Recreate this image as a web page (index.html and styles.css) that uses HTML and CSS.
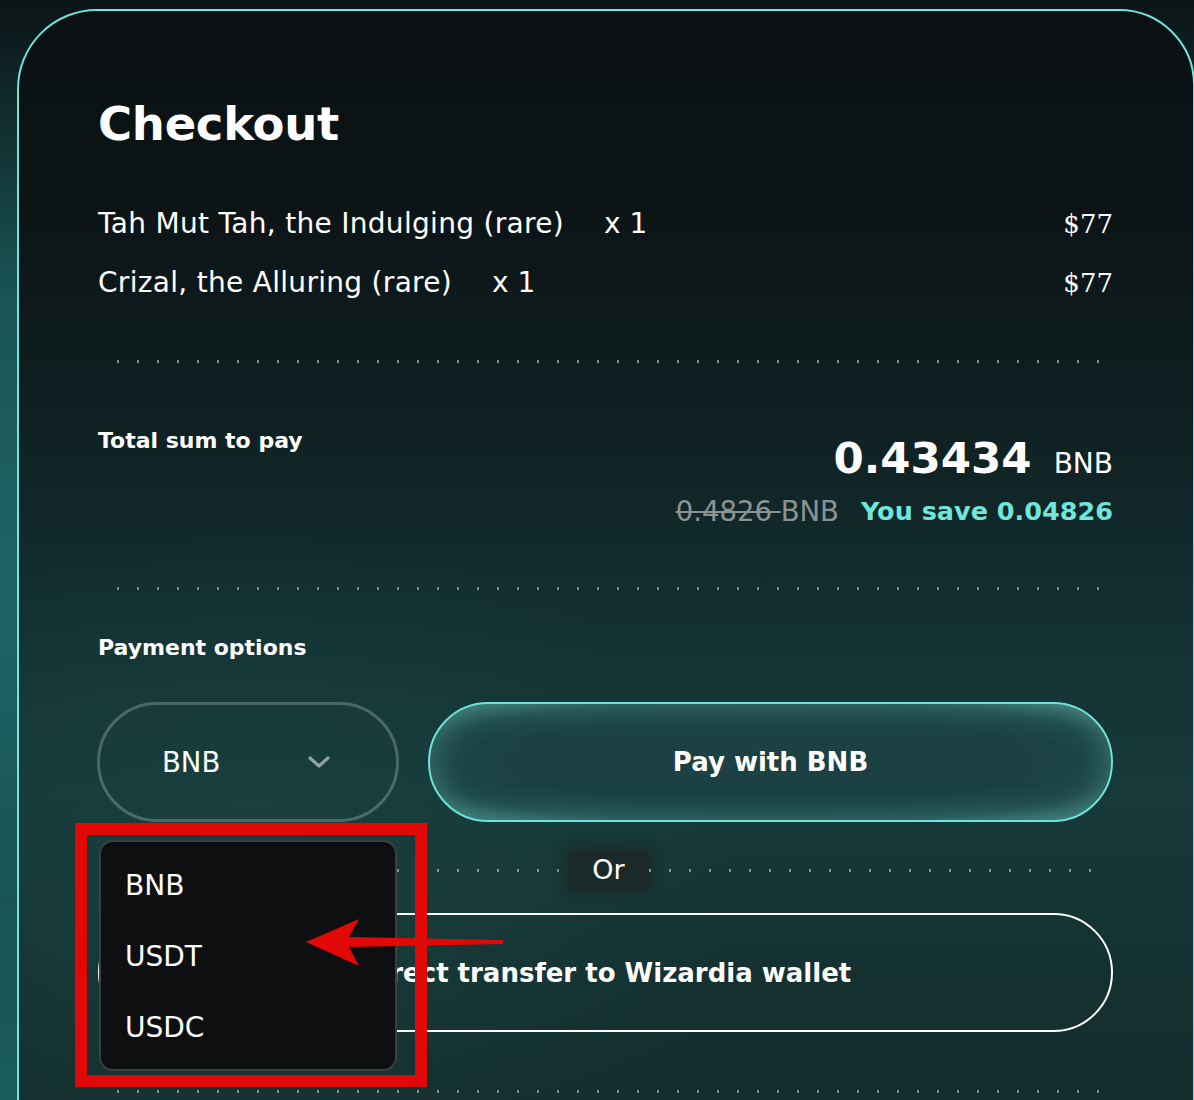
FILE: index.html
```html
<!DOCTYPE html>
<html lang="en">
<head>
    <meta charset="UTF-8">
    <meta name="viewport" content="width=device-width, initial-scale=1.0">
    <title>Checkout</title>
    <link rel="stylesheet" href="styles.css">
</head>
<body>
    <div class="card">
        <h1>Checkout</h1>

        <div class="items">
            <div class="item">
                <span class="item-name">Tah Mut Tah, the Indulging (rare)</span>
                <span class="item-qty">x 1</span>
                <span class="item-price">$77</span>
            </div>
            <div class="item">
                <span class="item-name">Crizal, the Alluring (rare)</span>
                <span class="item-qty">x 1</span>
                <span class="item-price">$77</span>
            </div>
        </div>

        <div class="dots dots-first"></div>

        <div class="total">
            <div class="label">Total sum to pay</div>
            <div class="total-right">
                <div class="amount"><span class="amount-num">0.43434</span><span class="amount-cur">BNB</span></div>
                <div class="saving"><span class="old-price"><s>0.4826 </s>BNB</span><span class="save">You save 0.04826</span></div>
            </div>
        </div>

        <div class="dots dots-second"></div>

        <div class="label label-options">Payment options</div>

        <div class="pay-row">
            <div class="select-wrap">
                <div class="select">
                    <span>BNB</span>
                    <svg width="22" height="14" viewBox="0 0 22 14"><path d="M2 3l9 8 9-8" fill="none" stroke="#8ea5a3" stroke-width="3.2" stroke-linecap="round" stroke-linejoin="round"/></svg>
                </div>
                <ul class="dropdown">
                    <li>BNB</li>
                    <li>USDT</li>
                    <li>USDC</li>
                </ul>
            </div>
            <button class="btn-pay" type="button">Pay with BNB</button>
        </div>

        <div class="or-row"><span class="or">Or</span></div>

        <button class="btn-wallet" type="button">Direct transfer to Wizardia wallet</button>

        <div class="dots dots-last"></div>
    </div>

    <!-- annotation drawn over the screenshot -->
    <svg class="annotation" width="1194" height="1100" viewBox="0 0 1194 1100">
        <rect x="81" y="829" width="340" height="252" fill="none" stroke="#e10808" stroke-width="12"/>
        <polygon points="306,942 359,919 349,937 503,940 503,944 349,947 359,966" fill="#e10808"/>
    </svg>
</body>
</html>
```

FILE: styles.css
```css
html, body { margin: 0; height: 1100px; overflow: hidden; }
body {
    font-family: "DejaVu Sans", sans-serif;
    color: #fff;
    background:
        linear-gradient(180deg, #0b1416 0px, #0d1c1e 40px, #1a5556 300px, #1e6465 600px, #185455 900px, #1a5c5d 1100px);
    position: relative;
}

.card {
    box-sizing: border-box;
    width: 1178px;
    min-height: 1160px;
    margin: 9px 0 0 17px;
    padding: 83px 80px 0 79px;
    border: 2px solid #6fe3d9;
    border-radius: 80px 76px 0 0;
    background:
        radial-gradient(ellipse 700px 500px at 20% 75%, rgba(28, 70, 70, 0.55), transparent 70%),
        linear-gradient(180deg, #0b1113 0px, #0c1416 200px, #0f1f21 400px, #143334 650px, #163939 780px, #14302f 1000px, #122a2a 1160px);
}

h1 { margin: 0; font-size: 46.5px; line-height: 60px; font-weight: bold; letter-spacing: -0.3px; }

.items { margin-top: 50px; display: flex; flex-direction: column; gap: 19px; }
.item { display: flex; align-items: center; font-size: 28px; line-height: 40px; }
.item-name { letter-spacing: 0.3px; }
.item-qty { margin-left: 40px; }
.item-price { margin-left: auto; font-family: "DejaVu Serif", serif; font-size: 26px; }

.dots {
    height: 3px;
    margin: 0 13px 0 19px;
    background: repeating-linear-gradient(90deg, rgba(200, 210, 210, 0.6) 0 2px, transparent 2px 20px);
}
.dots-first { margin-top: 57px; }
.dots-second { margin-top: 58px; }
.dots-last { margin-top: 58px; }

.label { font-size: 22px; line-height: 30px; font-weight: bold; }

.total { margin-top: 63px; display: flex; justify-content: space-between; align-items: flex-start; }
.total-right { margin-top: 7px; display: flex; flex-direction: column; align-items: flex-end; gap: 4px; }
.amount { display: flex; align-items: baseline; gap: 22px; line-height: 50px; }
.amount-num { font-size: 43.5px; font-weight: bold; }
.amount-cur { font-size: 28px; }
.saving { display: flex; gap: 22px; line-height: 36px; font-size: 27.5px; }
.old-price { color: #8b9394; }
.old-price s { text-decoration-thickness: 2px; }
.save { color: #6ee6dc; font-weight: bold; font-size: 25.5px; }

.label-options { margin-top: 43px; }

.pay-row { margin-top: 39px; display: flex; gap: 29px; }

.select-wrap { position: relative; width: 302px; margin-left: -1px; }
.select {
    box-sizing: border-box;
    height: 120px;
    padding: 0 66px 0 62px;
    border: 3px solid rgba(160, 180, 180, 0.38);
    border-radius: 60px;
    display: flex;
    align-items: center;
    justify-content: space-between;
    font-size: 27.5px;
}

.dropdown {
    position: absolute;
    top: calc(100% + 18px);
    left: 2px;
    box-sizing: border-box;
    width: 298px;
    height: 231px;
    margin: 0;
    padding: 8px 0 0 24px;
    list-style: none;
    background: #0e0f11;
    border: 2px solid #3b3f41;
    border-radius: 14px;
    font-size: 28px;
    z-index: 2;
}
.dropdown li { height: 71px; line-height: 71px; }

.btn-pay, .btn-wallet {
    font-family: inherit;
    font-size: 26px;
    font-weight: bold;
    color: #fff;
    border-radius: 60px;
    cursor: pointer;
}
.btn-pay {
    flex: 1;
    height: 120px;
    border: 2px solid #6fe3d9;
    background: radial-gradient(ellipse at 50% 50%, #1b4142 55%, #1e4747 75%, #3b7673 100%);
    box-shadow: inset 0 0 34px rgba(120, 220, 210, 0.35);
}

.or-row {
    margin-top: 28px;
    height: 40px;
    display: flex;
    align-items: center;
}
.or-row::before, .or-row::after {
    content: '';
    flex: 1;
    height: 3px;
    background: repeating-linear-gradient(90deg, rgba(200, 210, 210, 0.6) 0 2px, transparent 2px 20px);
}
.or-row::before { margin-left: 19px; }
.or-row::after { margin-right: 13px; }
.or {
    padding: 0 24px;
    line-height: 40px;
    font-size: 27px;
    background: rgba(32, 36, 36, 0.7);
    box-shadow: 0 0 10px 6px rgba(32, 36, 36, 0.45);
    border-radius: 6px;
}

.btn-wallet {
    display: block;
    width: 100%;
    height: 119px;
    margin-top: 23px;
    border: 2px solid #fff;
    background: transparent;
}

.annotation { position: absolute; top: 0; left: 0; z-index: 5; pointer-events: none; }
```
